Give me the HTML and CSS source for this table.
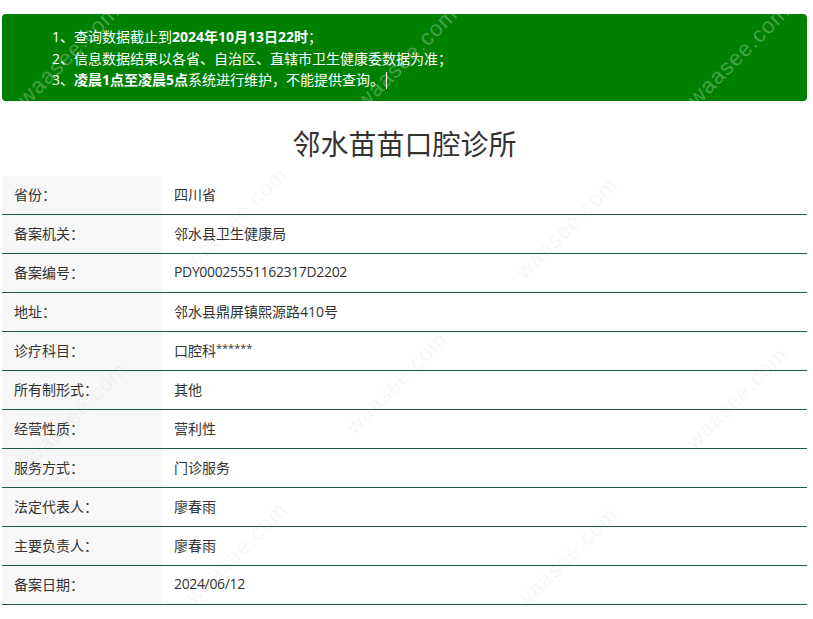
FILE: index.html
```html
<!DOCTYPE html>
<html lang="zh-CN">
<head>
<meta charset="utf-8">
<title>邻水苗苗口腔诊所</title>
<link rel="stylesheet" href="styles.css">
</head>
<body>
<div class="page">
  <div class="notice">
    <p>1、查询数据截止到<b>2024年10月13日22时</b>；</p>
    <p>2、信息数据结果以各省、自治区、直辖市卫生健康委数据为准；</p>
    <p>3、<b>凌晨1点至凌晨5点</b>系统进行维护，不能提供查询。<span class="caret"></span></p>
  </div>
  <h1 class="title">邻水苗苗口腔诊所</h1>
  <div class="info">
    <div class="row"><div class="label">省份：</div><div class="value">四川省</div></div>
    <div class="row"><div class="label">备案机关：</div><div class="value">邻水县卫生健康局</div></div>
    <div class="row"><div class="label">备案编号：</div><div class="value"><span class="latin">PDY00025551162317D2202</span></div></div>
    <div class="row"><div class="label">地址：</div><div class="value">邻水县鼎屏镇熙源路410号</div></div>
    <div class="row"><div class="label">诊疗科目：</div><div class="value">口腔科<span class="stars">******</span></div></div>
    <div class="row"><div class="label">所有制形式：</div><div class="value">其他</div></div>
    <div class="row"><div class="label">经营性质：</div><div class="value">营利性</div></div>
    <div class="row"><div class="label">服务方式：</div><div class="value">门诊服务</div></div>
    <div class="row"><div class="label">法定代表人：</div><div class="value">廖春雨</div></div>
    <div class="row"><div class="label">主要负责人：</div><div class="value">廖春雨</div></div>
    <div class="row"><div class="label">备案日期：</div><div class="value"><span class="latin">2024/06/12</span></div></div>
  </div>
</div>
<div class="watermarks" aria-hidden="true">
  <span class="wm wm-light wm1">waasee.com</span>
  <span class="wm wm-light wm2">waasee.com</span>
  <span class="wm wm-light wm3">waasee.com</span>
  <span class="wm wm4">waasee.com</span>
  <span class="wm wm5">waasee.com</span>
  <span class="wm wm6">waasee.com</span>
  <span class="wm wm7">waasee.com</span>
  <span class="wm wm8">waasee.com</span>
  <span class="wm wm9">waasee.com</span>
  <span class="wm wm10">waasee.com</span>
</div>
</body>
</html>
```
FILE: styles.css
```css
html, body {
  margin: 0;
  padding: 0;
  background: #fff;
}
body {
  font-family: "Open Sans", "Noto Sans CJK SC", sans-serif;
  font-size: 14px;
  color: #333;
  position: relative;
  overflow: hidden;
  height: 619px;
}
.page {
  width: 805px;
  padding: 14px 0 0 2px;
}
.notice {
  background: #008000;
  color: #fff;
  border-radius: 4px;
  height: 87px;
  box-sizing: border-box;
  padding: 12px 0 0 50px;
}
.notice p {
  margin: 0;
  line-height: 21.5px;
  font-size: 14px;
}
.notice b {
  font-weight: 700;
}
.caret {
  display: inline-block;
  width: 1px;
  height: 17px;
  background: #fff;
  vertical-align: -4px;
  margin-left: 2px;
}
.title {
  margin: 0;
  height: 75px;
  box-sizing: border-box;
  padding-top: 23px;
  text-align: center;
  font-size: 28px;
  font-weight: 400;
  line-height: 40px;
  color: #333;
}
.info {
  display: flex;
  flex-direction: column;
}
.row {
  display: flex;
  height: 39px;
  box-sizing: border-box;
  border-bottom: 1.5px solid #1f5c3c;
}
.label {
  width: 160px;
  flex: none;
  background: #f7f7f7;
  box-sizing: border-box;
  padding: 0 0 3px 12px;
  display: flex;
  align-items: center;
}
.value {
  flex: 1;
  padding: 0 0 3px 12px;
  display: flex;
  align-items: center;
  font-size: 14px;
}
.latin {
  letter-spacing: -0.35px;
}
.stars {
  font-size: 11px;
  align-self: center;
  margin-top: -4px;
}
.watermarks {
  position: absolute;
  inset: 0;
  pointer-events: none;
}
.wm {
  position: absolute;
  font-family: "Liberation Sans", sans-serif;
  font-size: 22px;
  letter-spacing: 1px;
  color: rgba(0, 0, 0, 0.05);
  transform: rotate(-45deg);
  transform-origin: center;
  white-space: nowrap;
}
.wm-light {
  color: rgba(255, 255, 255, 0.28);
}
.wm1 { left: 2px; top: 42px; }
.wm2 { left: 340px; top: 45px; }
.wm3 { left: 672px; top: 42px; }
.wm4 { left: 170px; top: 205px; }
.wm5 { left: 500px; top: 215px; }
.wm6 { left: 10px; top: 400px; }
.wm7 { left: 330px; top: 370px; }
.wm8 { left: 670px; top: 385px; }
.wm9 { left: 170px; top: 540px; }
.wm10 { left: 500px; top: 545px; }
```
